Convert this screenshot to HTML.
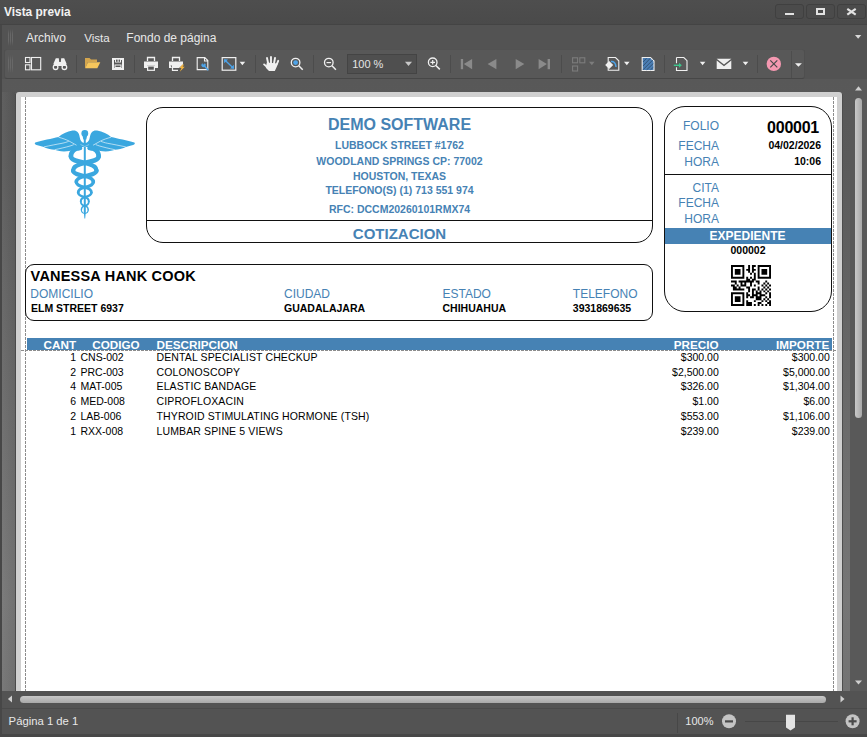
<!DOCTYPE html>
<html><head><meta charset="utf-8">
<style>
html,body{margin:0;padding:0;}
body{width:867px;height:737px;position:relative;overflow:hidden;background:#4b4b4b;font-family:"Liberation Sans",sans-serif;}
.t{position:absolute;white-space:nowrap;}
.box{position:absolute;border:1px solid #111;box-sizing:content-box;}
.a{position:absolute;}
</style></head><body>
<!-- title bar -->
<div class="a" style="left:0;top:0;width:867px;height:24px;background:linear-gradient(#4e4e4e,#4a4a4a)"></div>
<div class="a" style="left:0;top:24px;width:867px;height:1px;background:#444"></div>
<div class="t" style="left:4.00px;top:6.62px;font-size:11.9px;line-height:11.9px;font-weight:bold;color:#f2f2f2;">Vista previa</div>

<div class="a" style="left:775px;top:4px;width:27px;height:13px;border:1px solid #404040;border-radius:3px;background:#4b4b4b"></div>
<div class="a" style="left:806px;top:4px;width:27px;height:13px;border:1px solid #404040;border-radius:3px;background:#4b4b4b"></div>
<div class="a" style="left:837px;top:4px;width:27px;height:13px;border:1px solid #404040;border-radius:3px;background:#4b4b4b"></div>
<div class="a" style="left:785px;top:12.7px;width:9px;height:2.6px;background:#e2e2e2"></div>
<div class="a" style="left:816px;top:8px;width:5px;height:3px;border:2px solid #e2e2e2"></div>
<svg class="a" style="left:840px;top:4px" width="24" height="16" viewBox="840 4 24 16"><path d="M847.3 8.8 L855.7 14.6 M855.7 8.8 L847.3 14.6" stroke="#e2e2e2" stroke-width="2.2"/></svg>
<div class="a" style="left:16px;top:26px;width:1px;height:22px"></div>

<!-- main panel -->
<div class="a" style="left:0;top:25px;width:2px;height:712px;background:#474747"></div>
<div class="a" style="left:2px;top:25px;width:865px;height:54px;background:#535353"></div>
<div class="a" style="left:8px;top:29px;width:1px;height:17px;background:linear-gradient(rgba(120,120,120,0),rgba(106,106,106,.9) 30%,rgba(106,106,106,.9) 70%,rgba(120,120,120,0))"></div>
<div class="a" style="left:10px;top:29px;width:1px;height:17px;background:linear-gradient(rgba(120,120,120,0),rgba(106,106,106,.9) 30%,rgba(106,106,106,.9) 70%,rgba(120,120,120,0))"></div>
<div class="a" style="left:12px;top:29px;width:1px;height:17px;background:linear-gradient(rgba(120,120,120,0),rgba(106,106,106,.9) 30%,rgba(106,106,106,.9) 70%,rgba(120,120,120,0))"></div>
<svg class="a" style="left:850px;top:30px" width="17" height="12" viewBox="850 30 17 12"><path d="M855 35 L861.3 35 L858.15 38.8 Z" fill="#d8d8d8"/></svg>
<div class="t" style="left:26.00px;top:31.83px;font-size:12px;line-height:12px;font-weight:normal;color:#e8e8e8;">Archivo</div>

<div class="t" style="left:84.20px;top:32.17px;font-size:11.6px;line-height:11.6px;font-weight:normal;color:#e8e8e8;">Vista</div>

<div class="t" style="left:126.30px;top:31.83px;font-size:12px;line-height:12px;font-weight:normal;color:#e8e8e8;">Fondo de página</div>

<!-- toolbar -->
<div class="a" style="left:4px;top:49px;width:799px;height:28px;background:#585858;border:1px solid #4f4f4f;border-top-color:#525252;border-bottom-color:#474747;border-radius:3px"></div>
<div class="a" style="left:791px;top:51px;width:1px;height:27px;background:#4d4d4d"></div>
<div class="a" style="left:347px;top:54px;width:68px;height:18px;background:#4f4f4f;border:1px solid #444"></div>
<div class="t" style="left:352.20px;top:58.66px;font-size:11px;line-height:11px;font-weight:normal;color:#e6e6e6;">100 %</div>

<svg class="a" style="left:400px;top:58px" width="16" height="12" viewBox="400 58 16 12"><path d="M405 61.8 L412 61.8 L408.5 66 Z" fill="#c8c8c8"/></svg>
<div class="a" style="left:8px;top:55px;width:1px;height:18px;background:linear-gradient(rgba(120,120,120,0),rgba(106,106,106,.9) 30%,rgba(106,106,106,.9) 70%,rgba(120,120,120,0))"></div>
<div class="a" style="left:10px;top:55px;width:1px;height:18px;background:linear-gradient(rgba(120,120,120,0),rgba(106,106,106,.9) 30%,rgba(106,106,106,.9) 70%,rgba(120,120,120,0))"></div>
<div class="a" style="left:12px;top:55px;width:1px;height:18px;background:linear-gradient(rgba(120,120,120,0),rgba(106,106,106,.9) 30%,rgba(106,106,106,.9) 70%,rgba(120,120,120,0))"></div>
<div class="a" style="left:76px;top:55px;width:1px;height:18px;background:#4c4c4c"></div>
<div class="a" style="left:134px;top:55px;width:1px;height:18px;background:#4c4c4c"></div>
<div class="a" style="left:255px;top:55px;width:1px;height:18px;background:#4c4c4c"></div>
<div class="a" style="left:313px;top:55px;width:1px;height:18px;background:#4c4c4c"></div>
<div class="a" style="left:450px;top:55px;width:1px;height:18px;background:#4c4c4c"></div>
<div class="a" style="left:561px;top:55px;width:1px;height:18px;background:#4c4c4c"></div>
<div class="a" style="left:664px;top:55px;width:1px;height:18px;background:#4c4c4c"></div>
<div class="a" style="left:757px;top:55px;width:1px;height:18px;background:#4c4c4c"></div>
<svg class="a" style="left:0px;top:48px;" width="867" height="32" viewBox="0 48 867 32"><g fill="none" stroke="#f0f0f0" stroke-width="1.1"><rect x="25.5" y="57.5" width="4.5" height="5"/><rect x="25.5" y="64.8" width="4.5" height="5"/><rect x="31.5" y="57.5" width="9.2" height="12.3"/></g><g fill="#f0f0f0"><path d="M53.5 63.5 L55.8 58.2 L58.8 58.2 L59.2 62 L60.8 62 L61.2 58.2 L64.2 58.2 L66.5 63.5 L66 66 L54 66 Z"/></g><g fill="none" stroke="#f0f0f0" stroke-width="1.3"><circle cx="55.6" cy="67.2" r="2.3"/><circle cx="64.4" cy="67.2" r="2.3"/></g><path d="M85 58 L89.5 58 L91 59.5 L97 59.5 L97 62 L88 62 L85.5 68 L85 68 Z" fill="#d3a54e"/><path d="M88 62.3 L100.3 62.3 L97.3 68.3 L85.2 68.3 Z" fill="#f6c65c"/><path d="M112 58 L124 58 L124 70 L112 70 Z M114 60 L114 68 L122 68 L122 60 Z" fill="#f0f0f0" fill-rule="evenodd"/><rect x="115" y="59" width="6" height="3.5" fill="#f0f0f0"/><rect x="116" y="59.6" width="1.6" height="2.2" fill="#585858"/><rect x="118.6" y="59.6" width="1.4" height="2.2" fill="#585858"/><path d="M114.5 64.5 L121.5 64.5 L121.5 68 L114.5 68 Z M115.5 65.5 L115.5 67 L120.5 67 L120.5 65.5 Z" fill="#f0f0f0" fill-rule="evenodd"/><path d="M147.5 61 L147.5 57.5 L154.5 57.5 L154.5 61" fill="none" stroke="#f0f0f0" stroke-width="1.3"/><path d="M144 61.5 L158 61.5 L158 68 L155 68 L155 65.5 L147 65.5 L147 68 L144 68 Z" fill="#f0f0f0"/><rect x="147.6" y="66" width="6.8" height="4.3" fill="none" stroke="#f0f0f0" stroke-width="1.2"/><path d="M172.5 61 L172.5 57.5 L179.5 57.5 L179.5 61" fill="none" stroke="#f0f0f0" stroke-width="1.3"/><path d="M169 61.5 L183 61.5 L183 64.5 L179 68 L172 68 L172 65.5 L170.5 65.5 L172 68 L169 68 Z" fill="#f0f0f0"/><path d="M172.5 66 L172.5 70.3 L178 70.3" fill="none" stroke="#f0f0f0" stroke-width="1.2"/><path d="M182.5 64.5 L179.5 68 L181.5 68 L179.8 71.7 L184.8 66.8 L182.6 66.8 L184 64.5 Z" fill="#f2b33d"/><path d="M197.2 57.6 L204.8 57.6 L207.8 60.6 L207.8 69.6 L197.2 69.6 Z M204.5 57.6 L204.5 61 L207.8 61" fill="none" stroke="#f0f0f0" stroke-width="1.1"/><path d="M201.6 64 A2.2 2.2 0 1 0 204.8 63.2 L203.8 64.5 L202.8 64.3 L202.6 63.3 Z" fill="#4da3e8"/><path d="M204 65.5 L208.3 70.3" stroke="#4da3e8" stroke-width="1.6"/><rect x="222.2" y="57.6" width="13.6" height="12.6" fill="none" stroke="#f0f0f0" stroke-width="1.2"/><path d="M224.5 59.8 L233.5 68.2" stroke="#4da3e8" stroke-width="1.3"/><path d="M224 59.3 L228 59.5 L224.2 63.2 Z M234 68.7 L230 68.5 L233.8 64.8 Z" fill="#4da3e8"/><path d="M239.6 61.8 L245.2 61.8 L242.4 65.3 Z" fill="#f0f0f0"/><path d="M589 61.8 L594.6 61.8 L591.8 65.3 Z" fill="#7c7c7c"/><path d="M624 61.8 L629.6 61.8 L626.8 65.3 Z" fill="#f0f0f0"/><path d="M699.8 61.8 L705.4 61.8 L702.5999999999999 65.3 Z" fill="#f0f0f0"/><path d="M742.7 61.8 L748.3000000000001 61.8 L745.5 65.3 Z" fill="#f0f0f0"/><g stroke="#f0f0f0" stroke-width="1.9" stroke-linecap="round" fill="none"><path d="M267.0 58 L268.3 64 M271.0 57 L271.0 63.5 M275.0 58 L274.0 63.5 M278.2 60.8 L276.5 65 M264.1 64.4 L268 67.8"/></g><path d="M266.8 62.5 L277.6 63.5 L276.8 66.8 L274.8 70.9 L269 70.9 L265.8 67.8 Z" fill="#f0f0f0"/><circle cx="295.6" cy="62.6" r="4.3" fill="none" stroke="#f0f0f0" stroke-width="1.3"/><circle cx="295.6" cy="62.6" r="2.4" fill="#4da3e8"/><path d="M298.8 65.8 L302.7 69.7" stroke="#f0f0f0" stroke-width="1.5"/><circle cx="328.8" cy="62.6" r="4.3" fill="none" stroke="#f0f0f0" stroke-width="1.3"/><path d="M326.5 62.6 L331.1 62.6" stroke="#f0f0f0" stroke-width="1.2"/><path d="M332 65.8 L335.9 69.7" stroke="#f0f0f0" stroke-width="1.5"/><circle cx="432.7" cy="62.3" r="4.3" fill="none" stroke="#f0f0f0" stroke-width="1.3"/><path d="M430.4 62.3 L435 62.3 M432.7 60 L432.7 64.6" stroke="#f0f0f0" stroke-width="1.2"/><path d="M435.9 65.5 L439.8 69.4" stroke="#f0f0f0" stroke-width="1.5"/><rect x="460.8" y="59" width="2.3" height="10.2" fill="#8a8a8a"/><path d="M472.1 59 L472.1 69.2 L463.8 64.1 Z" fill="#8a8a8a"/><path d="M496.4 59 L496.4 69.2 L487.6 64.1 Z" fill="#8a8a8a"/><path d="M515.7 59 L515.7 69.2 L524.3 64.1 Z" fill="#8a8a8a"/><path d="M538.6 59 L538.6 69.2 L546.9 64.1 Z" fill="#8a8a8a"/><rect x="547.6" y="59" width="2.4" height="10.2" fill="#8a8a8a"/><g fill="none" stroke="#7c7c7c" stroke-width="1.1"><rect x="572.6" y="57.8" width="5" height="5"/><rect x="579.8" y="57.8" width="5" height="5"/><rect x="572.6" y="66" width="5" height="5"/></g><path d="M608.2 57.5 L615.5 57.5 L618.8 60.8 L618.8 70.3 L608.2 70.3 Z" fill="none" stroke="#f0f0f0" stroke-width="1.1"/><path d="M605.2 65 L609.2 61 L613.2 65 L609.2 69 Z" fill="#f0f0f0"/><path d="M611 61.5 C614 61.3 615.8 63 616 67" fill="none" stroke="#4da3e8" stroke-width="1.5"/><path d="M642.2 57.5 L650.5 57.5 L654 61 L654 70.5 L642.2 70.5 Z" fill="#4a7db3" stroke="#f0f0f0" stroke-width="1.1"/><g stroke="#2f4f70" stroke-width="0.9"><path d="M643 62 L646.5 58.3 M643 66 L650.3 58.3 M643 69.8 L653.3 59.5 M646.7 69.8 L653.3 63.5 M650.5 69.8 L653.3 67.3"/></g><path d="M676.5 57.5 L683.8 57.5 L687 60.7 L687 70.5 L676.5 70.5 L676.5 67.3 M676.5 63.3 L676.5 57.5" fill="none" stroke="#f0f0f0" stroke-width="1.1"/><path d="M673.8 65.3 L680 65.3" stroke="#3cc58b" stroke-width="1.4"/><path d="M679 62.8 L681.8 65.3 L679 67.8 Z" fill="#3cc58b"/><path d="M716.7 58.7 L731.3 58.7 L724 64.5 Z" fill="#f0f0f0"/><path d="M716.7 60.5 L724 66.3 L731.3 60.5 L731.3 69.1 L716.7 69.1 Z" fill="#f0f0f0"/><circle cx="773.8" cy="63.9" r="7.2" fill="#f598b1"/><path d="M770.3 60.4 L777.3 67.4 M777.3 60.4 L770.3 67.4" stroke="#4a4a4a" stroke-width="1.2"/><path d="M795 63.2 L801.9 63.2 L798.45 66.7 Z" fill="#f0f0f0"/></svg>

<!-- preview area -->
<div class="a" style="left:2px;top:79px;width:848px;height:612px;background:linear-gradient(#585858 0px,#5a5a5a 80px,#6a6a6a 320px,#767676 520px,#737373 613px)"></div>
<!-- page -->
<div class="a" style="left:16px;top:92px;width:826px;height:599px;background:#d0d0d0;border-radius:3px 3px 0 0"></div>
<div class="a" style="left:2px;top:92px;width:13px;height:599px;background:linear-gradient(90deg,rgba(255,255,255,.045),rgba(0,0,0,.045))"></div>
<div class="a" style="left:15px;top:94px;width:1px;height:597px;background:#4a4a4a"></div>
<div class="a" style="left:842px;top:94px;width:1px;height:597px;background:#4d4d4d"></div>
<div class="a" style="left:21px;top:97px;width:816px;height:594px;background:#fff;overflow:hidden">
<div class="a" style="left:4px;top:0;width:1px;height:594px;background:repeating-linear-gradient(#8c8c8c 0 2.6px,rgba(255,255,255,0) 2.6px 4px)"></div>
<div class="a" style="left:812px;top:0;width:1px;height:594px;background:repeating-linear-gradient(#8c8c8c 0 2.6px,rgba(255,255,255,0) 2.6px 4px)"></div>
</div>
<div class="a" style="left:0;top:0;width:867px;height:737px;">
<svg class="a" style="left:30px;top:125px" width="110" height="100" viewBox="30 125 110 100"><path d="M77.8 132.3 C76.5 130.5 74.5 130.2 72.5 130.5 C67 131.5 62 134 58.5 137 C52 138.5 42 140.5 35.3 142.6 C34.2 143.2 34.8 144.5 36.5 145 C39 145.8 41.5 146.5 43.8 146.9 C44.5 147.6 47 148.4 49.5 148.9 C51 149.3 53 149.6 54.8 149.7 C56 150.5 60 151.2 64 151.5 C68 151.5 71 150.8 74 149.6 L84.8 146.5 L84.8 143 C82.5 142.8 81 141.5 80.3 139.5 C79.5 137 79.5 134 77.8 132.3 Z" fill="#3aa7df"/><path d="M77.8 132.3 C76.5 130.5 74.5 130.2 72.5 130.5 C67 131.5 62 134 58.5 137 C52 138.5 42 140.5 35.3 142.6 C34.2 143.2 34.8 144.5 36.5 145 C39 145.8 41.5 146.5 43.8 146.9 C44.5 147.6 47 148.4 49.5 148.9 C51 149.3 53 149.6 54.8 149.7 C56 150.5 60 151.2 64 151.5 C68 151.5 71 150.8 74 149.6 L84.8 146.5 L84.8 143 C82.5 142.8 81 141.5 80.3 139.5 C79.5 137 79.5 134 77.8 132.3 Z" fill="#3aa7df" transform="translate(169.6 0) scale(-1 1)"/><path d="M83.8 137 L85.8 137 L85.8 212 L85.2 218.5 L84.4 218.5 L83.8 212 Z" fill="#3aa7df"/><ellipse cx="84.8" cy="133.4" rx="3.4" ry="3.3" fill="#3aa7df"/><path d="M82.6 136 L87 136 L86.3 139.5 L83.3 139.5 Z" fill="#3aa7df"/><path d="M58.5 137.2 C62.5 138.3 66 139.5 69 141 C71.5 142.3 74 143.8 76.5 145.2 M43.8 146.9 C50 145.6 57 144.2 62 143.3 C65 142.7 67 142 68.7 141.3 M54.8 149.7 C60 148.6 66 147.2 70 146 C71.5 145.5 72.8 145.1 73.8 144.6" fill="none" stroke="#ffffff" stroke-opacity="0.8" stroke-width="0.75"/><path d="M58.5 137.2 C62.5 138.3 66 139.5 69 141 C71.5 142.3 74 143.8 76.5 145.2 M43.8 146.9 C50 145.6 57 144.2 62 143.3 C65 142.7 67 142 68.7 141.3 M54.8 149.7 C60 148.6 66 147.2 70 146 C71.5 145.5 72.8 145.1 73.8 144.6" fill="none" stroke="#ffffff" stroke-opacity="0.8" stroke-width="0.75" transform="translate(169.6 0) scale(-1 1)"/><path d="M80.5 144.5 L84.8 146.5 L89.1 144.5" fill="none" stroke="#fff" stroke-opacity="0.6" stroke-width="0.6"/><path d="M79.50 148.00 C75.20 148.00 70.90 151.32 70.90 156.30" fill="none" stroke="#3aa7df" stroke-width="4.6" stroke-linecap="round"/><path d="M70.90 156.30 C70.90 159.93 77.16 161.22 84.80 162.90" fill="none" stroke="#3aa7df" stroke-width="4.6" stroke-linecap="round"/><path d="M84.80 162.90 C91.23 164.32 96.50 166.32 96.50 170.50" fill="none" stroke="#3aa7df" stroke-width="4.4" stroke-linecap="round"/><path d="M96.50 170.50 C96.50 173.63 91.23 174.78 84.80 176.20" fill="none" stroke="#3aa7df" stroke-width="4.2" stroke-linecap="round"/><path d="M84.80 176.20 C80.12 177.23 76.30 178.81 76.30 182.00" fill="none" stroke="#3aa7df" stroke-width="3.6" stroke-linecap="round"/><path d="M76.30 182.00 C76.30 184.97 80.12 186.37 84.80 187.40" fill="none" stroke="#3aa7df" stroke-width="3.3" stroke-linecap="round"/><path d="M84.80 187.40 C88.43 188.20 91.40 189.74 91.40 192.60" fill="none" stroke="#3aa7df" stroke-width="2.8" stroke-linecap="round"/><path d="M91.40 192.60 C91.40 195.13 88.43 196.40 84.80 197.20" fill="none" stroke="#3aa7df" stroke-width="2.4" stroke-linecap="round"/><path d="M84.80 197.20 C82.60 197.68 80.80 199.09 80.80 201.40" fill="none" stroke="#3aa7df" stroke-width="2.0" stroke-linecap="round"/><path d="M80.80 201.40 C80.80 203.82 82.60 205.32 84.80 205.80" fill="none" stroke="#3aa7df" stroke-width="1.7" stroke-linecap="round"/><path d="M84.80 205.80 C86.67 206.21 88.20 207.65 88.20 209.90" fill="none" stroke="#3aa7df" stroke-width="1.4" stroke-linecap="round"/><path d="M88.20 209.90 C88.20 211.88 86.67 213.09 84.80 213.50" fill="none" stroke="#3aa7df" stroke-width="1.1" stroke-linecap="round"/><path d="M90.10 148.00 C94.40 148.00 98.70 151.32 98.70 156.30" fill="none" stroke="#3aa7df" stroke-width="4.6" stroke-linecap="round"/><path d="M98.70 156.30 C98.70 159.93 92.44 161.22 84.80 162.90" fill="none" stroke="#3aa7df" stroke-width="4.6" stroke-linecap="round"/><path d="M84.80 162.90 C78.36 164.32 73.10 166.32 73.10 170.50" fill="none" stroke="#3aa7df" stroke-width="4.4" stroke-linecap="round"/><path d="M73.10 170.50 C73.10 173.63 78.36 174.78 84.80 176.20" fill="none" stroke="#3aa7df" stroke-width="4.2" stroke-linecap="round"/><path d="M84.80 176.20 C89.47 177.23 93.30 178.81 93.30 182.00" fill="none" stroke="#3aa7df" stroke-width="3.6" stroke-linecap="round"/><path d="M93.30 182.00 C93.30 184.97 89.47 186.37 84.80 187.40" fill="none" stroke="#3aa7df" stroke-width="3.3" stroke-linecap="round"/><path d="M84.80 187.40 C81.17 188.20 78.20 189.74 78.20 192.60" fill="none" stroke="#3aa7df" stroke-width="2.8" stroke-linecap="round"/><path d="M78.20 192.60 C78.20 195.13 81.17 196.40 84.80 197.20" fill="none" stroke="#3aa7df" stroke-width="2.4" stroke-linecap="round"/><path d="M84.80 197.20 C87.00 197.68 88.80 199.09 88.80 201.40" fill="none" stroke="#3aa7df" stroke-width="2.0" stroke-linecap="round"/><path d="M88.80 201.40 C88.80 203.82 87.00 205.32 84.80 205.80" fill="none" stroke="#3aa7df" stroke-width="1.7" stroke-linecap="round"/><path d="M84.80 205.80 C82.93 206.21 81.40 207.65 81.40 209.90" fill="none" stroke="#3aa7df" stroke-width="1.4" stroke-linecap="round"/><path d="M81.40 209.90 C81.40 211.88 82.93 213.09 84.80 213.50" fill="none" stroke="#3aa7df" stroke-width="1.1" stroke-linecap="round"/><ellipse cx="78" cy="148.2" rx="4.2" ry="2.2" fill="#3aa7df"/><ellipse cx="91.6" cy="148.2" rx="4.2" ry="2.2" fill="#3aa7df"/></svg>
<div class="box" style="left:146px;top:107px;width:505px;height:134px;border-radius:17px;"></div>
<div style="position:absolute;left:147px;top:220px;width:505px;height:1px;background:#111"></div>
<div class="t" style="left:99.50px;width:600px;text-align:center;top:117.01px;font-size:16px;line-height:16px;font-weight:bold;color:#4682b4;">DEMO SOFTWARE</div>
<div class="t" style="left:99.50px;width:600px;text-align:center;top:140.38px;font-size:10.5px;line-height:10.5px;font-weight:bold;color:#4682b4;">LUBBOCK STREET #1762</div>
<div class="t" style="left:99.50px;width:600px;text-align:center;top:156.28px;font-size:10.5px;line-height:10.5px;font-weight:bold;color:#4682b4;">WOODLAND SPRINGS CP: 77002</div>
<div class="t" style="left:99.50px;width:600px;text-align:center;top:171.28px;font-size:10.5px;line-height:10.5px;font-weight:bold;color:#4682b4;">HOUSTON, TEXAS</div>
<div class="t" style="left:99.50px;width:600px;text-align:center;top:185.08px;font-size:10.5px;line-height:10.5px;font-weight:bold;color:#4682b4;">TELEFONO(S) (1) 713 551 974</div>
<div class="t" style="left:99.50px;width:600px;text-align:center;top:203.58px;font-size:10.5px;line-height:10.5px;font-weight:bold;color:#4682b4;">RFC: DCCM20260101RMX74</div>
<div class="t" style="left:99.50px;width:600px;text-align:center;top:226.34px;font-size:15px;line-height:15px;font-weight:bold;color:#4682b4;">COTIZACION</div>
<div class="box" style="left:664px;top:106px;width:166px;height:204px;border-radius:21px;"></div>
<div style="position:absolute;left:665px;top:174px;width:166px;height:1px;background:#111"></div>
<div style="position:absolute;left:665px;top:228px;width:166px;height:16px;background:#4682b4"></div>
<div class="t" style="left:119.00px;width:600px;text-align:right;top:120.03px;font-size:12px;line-height:12px;font-weight:normal;color:#4682b4;">FOLIO</div>
<div class="t" style="left:119.00px;width:600px;text-align:right;top:139.73px;font-size:12px;line-height:12px;font-weight:normal;color:#4682b4;">FECHA</div>
<div class="t" style="left:119.00px;width:600px;text-align:right;top:156.03px;font-size:12px;line-height:12px;font-weight:normal;color:#4682b4;">HORA</div>
<div class="t" style="left:119.00px;width:600px;text-align:right;top:181.63px;font-size:12px;line-height:12px;font-weight:normal;color:#4682b4;">CITA</div>
<div class="t" style="left:119.00px;width:600px;text-align:right;top:196.83px;font-size:12px;line-height:12px;font-weight:normal;color:#4682b4;">FECHA</div>
<div class="t" style="left:119.00px;width:600px;text-align:right;top:212.53px;font-size:12px;line-height:12px;font-weight:normal;color:#4682b4;">HORA</div>
<div class="t" style="left:219.00px;width:600px;text-align:right;top:119.71px;font-size:16px;line-height:16px;font-weight:bold;color:#000;letter-spacing:-0.25px;">000001</div>
<div class="t" style="left:221.00px;width:600px;text-align:right;top:140.08px;font-size:10.5px;line-height:10.5px;font-weight:bold;color:#000;">04/02/2026</div>
<div class="t" style="left:221.00px;width:600px;text-align:right;top:156.08px;font-size:10.5px;line-height:10.5px;font-weight:bold;color:#000;">10:06</div>
<div class="t" style="left:447.50px;width:600px;text-align:center;top:230.03px;font-size:12px;line-height:12px;font-weight:bold;color:#fff;">EXPEDIENTE</div>
<div class="t" style="left:448.00px;width:600px;text-align:center;top:245.08px;font-size:10.5px;line-height:10.5px;font-weight:bold;color:#000;">000002</div>
<svg style="position:absolute;left:731px;top:265px" width="40" height="41" viewBox="0 0 21 21" preserveAspectRatio="none"><path d="M0 0h1v1h-1zM1 0h1v1h-1zM2 0h1v1h-1zM3 0h1v1h-1zM4 0h1v1h-1zM5 0h1v1h-1zM6 0h1v1h-1zM9 0h1v1h-1zM11 0h1v1h-1zM12 0h1v1h-1zM14 0h1v1h-1zM15 0h1v1h-1zM16 0h1v1h-1zM17 0h1v1h-1zM18 0h1v1h-1zM19 0h1v1h-1zM20 0h1v1h-1zM0 1h1v1h-1zM6 1h1v1h-1zM9 1h1v1h-1zM11 1h1v1h-1zM14 1h1v1h-1zM20 1h1v1h-1zM0 2h1v1h-1zM2 2h1v1h-1zM3 2h1v1h-1zM4 2h1v1h-1zM6 2h1v1h-1zM8 2h1v1h-1zM9 2h1v1h-1zM11 2h1v1h-1zM12 2h1v1h-1zM14 2h1v1h-1zM16 2h1v1h-1zM17 2h1v1h-1zM18 2h1v1h-1zM20 2h1v1h-1zM0 3h1v1h-1zM2 3h1v1h-1zM3 3h1v1h-1zM4 3h1v1h-1zM6 3h1v1h-1zM9 3h1v1h-1zM11 3h1v1h-1zM14 3h1v1h-1zM16 3h1v1h-1zM17 3h1v1h-1zM18 3h1v1h-1zM20 3h1v1h-1zM0 4h1v1h-1zM2 4h1v1h-1zM3 4h1v1h-1zM4 4h1v1h-1zM6 4h1v1h-1zM10 4h1v1h-1zM12 4h1v1h-1zM14 4h1v1h-1zM16 4h1v1h-1zM17 4h1v1h-1zM18 4h1v1h-1zM20 4h1v1h-1zM0 5h1v1h-1zM6 5h1v1h-1zM12 5h1v1h-1zM14 5h1v1h-1zM20 5h1v1h-1zM0 6h1v1h-1zM1 6h1v1h-1zM2 6h1v1h-1zM3 6h1v1h-1zM4 6h1v1h-1zM5 6h1v1h-1zM6 6h1v1h-1zM8 6h1v1h-1zM10 6h1v1h-1zM12 6h1v1h-1zM14 6h1v1h-1zM15 6h1v1h-1zM16 6h1v1h-1zM17 6h1v1h-1zM18 6h1v1h-1zM19 6h1v1h-1zM20 6h1v1h-1zM8 7h1v1h-1zM9 7h1v1h-1zM11 7h1v1h-1zM12 7h1v1h-1zM0 8h1v1h-1zM1 8h1v1h-1zM2 8h1v1h-1zM4 8h1v1h-1zM5 8h1v1h-1zM6 8h1v1h-1zM7 8h1v1h-1zM8 8h1v1h-1zM9 8h1v1h-1zM10 8h1v1h-1zM11 8h1v1h-1zM13 8h1v1h-1zM14 8h1v1h-1zM18 8h1v1h-1zM2 9h1v1h-1zM5 9h1v1h-1zM7 9h1v1h-1zM10 9h1v1h-1zM14 9h1v1h-1zM17 9h1v1h-1zM19 9h1v1h-1zM0 10h1v1h-1zM1 10h1v1h-1zM3 10h1v1h-1zM5 10h1v1h-1zM6 10h1v1h-1zM7 10h1v1h-1zM10 10h1v1h-1zM12 10h1v1h-1zM16 10h1v1h-1zM18 10h1v1h-1zM20 10h1v1h-1zM1 11h1v1h-1zM2 11h1v1h-1zM4 11h1v1h-1zM8 11h1v1h-1zM9 11h1v1h-1zM14 11h1v1h-1zM17 11h1v1h-1zM19 11h1v1h-1zM1 12h1v1h-1zM2 12h1v1h-1zM3 12h1v1h-1zM4 12h1v1h-1zM5 12h1v1h-1zM6 12h1v1h-1zM9 12h1v1h-1zM11 12h1v1h-1zM12 12h1v1h-1zM14 12h1v1h-1zM16 12h1v1h-1zM18 12h1v1h-1zM20 12h1v1h-1zM9 13h1v1h-1zM11 13h1v1h-1zM13 13h1v1h-1zM15 13h1v1h-1zM17 13h1v1h-1zM19 13h1v1h-1zM0 14h1v1h-1zM1 14h1v1h-1zM2 14h1v1h-1zM3 14h1v1h-1zM4 14h1v1h-1zM5 14h1v1h-1zM6 14h1v1h-1zM8 14h1v1h-1zM11 14h1v1h-1zM13 14h1v1h-1zM14 14h1v1h-1zM15 14h1v1h-1zM18 14h1v1h-1zM20 14h1v1h-1zM0 15h1v1h-1zM6 15h1v1h-1zM8 15h1v1h-1zM9 15h1v1h-1zM11 15h1v1h-1zM12 15h1v1h-1zM13 15h1v1h-1zM15 15h1v1h-1zM16 15h1v1h-1zM17 15h1v1h-1zM20 15h1v1h-1zM0 16h1v1h-1zM2 16h1v1h-1zM3 16h1v1h-1zM4 16h1v1h-1zM6 16h1v1h-1zM8 16h1v1h-1zM10 16h1v1h-1zM11 16h1v1h-1zM13 16h1v1h-1zM14 16h1v1h-1zM15 16h1v1h-1zM18 16h1v1h-1zM20 16h1v1h-1zM0 17h1v1h-1zM2 17h1v1h-1zM3 17h1v1h-1zM4 17h1v1h-1zM6 17h1v1h-1zM13 17h1v1h-1zM14 17h1v1h-1zM15 17h1v1h-1zM17 17h1v1h-1zM19 17h1v1h-1zM0 18h1v1h-1zM2 18h1v1h-1zM3 18h1v1h-1zM4 18h1v1h-1zM6 18h1v1h-1zM8 18h1v1h-1zM12 18h1v1h-1zM16 18h1v1h-1zM18 18h1v1h-1zM20 18h1v1h-1zM0 19h1v1h-1zM6 19h1v1h-1zM8 19h1v1h-1zM9 19h1v1h-1zM10 19h1v1h-1zM14 19h1v1h-1zM15 19h1v1h-1zM19 19h1v1h-1zM20 19h1v1h-1zM0 20h1v1h-1zM1 20h1v1h-1zM2 20h1v1h-1zM3 20h1v1h-1zM4 20h1v1h-1zM5 20h1v1h-1zM6 20h1v1h-1zM8 20h1v1h-1zM9 20h1v1h-1zM10 20h1v1h-1zM12 20h1v1h-1zM14 20h1v1h-1zM16 20h1v1h-1zM18 20h1v1h-1zM20 20h1v1h-1z" fill="#000"/></svg>
<div class="box" style="left:25px;top:264px;width:626px;height:55px;border-radius:9px;"></div>
<div class="t" style="left:30.60px;top:268.56px;font-size:14.5px;line-height:14.5px;font-weight:bold;color:#000;letter-spacing:0.2px;">VANESSA HANK COOK</div>
<div class="t" style="left:30.30px;top:287.93px;font-size:12px;line-height:12px;font-weight:normal;color:#4682b4;">DOMICILIO</div>
<div class="t" style="left:31.00px;top:302.98px;font-size:10.5px;line-height:10.5px;font-weight:bold;color:#000;">ELM STREET 6937</div>
<div class="t" style="left:284.00px;top:287.93px;font-size:12px;line-height:12px;font-weight:normal;color:#4682b4;">CIUDAD</div>
<div class="t" style="left:284.00px;top:302.98px;font-size:10.5px;line-height:10.5px;font-weight:bold;color:#000;">GUADALAJARA</div>
<div class="t" style="left:442.50px;top:287.93px;font-size:12px;line-height:12px;font-weight:normal;color:#4682b4;">ESTADO</div>
<div class="t" style="left:442.50px;top:302.98px;font-size:10.5px;line-height:10.5px;font-weight:bold;color:#000;">CHIHUAHUA</div>
<div class="t" style="left:572.80px;top:287.93px;font-size:12px;line-height:12px;font-weight:normal;color:#4682b4;">TELEFONO</div>
<div class="t" style="left:572.80px;top:302.98px;font-size:10.5px;line-height:10.5px;font-weight:bold;color:#000;">3931869635</div>
<div style="position:absolute;left:27px;top:338px;width:805px;height:12px;background:#4682b4"></div>
<div class="t" style="left:43.60px;top:338.78px;font-size:11.7px;line-height:11.7px;font-weight:bold;color:#fff;">CANT</div>
<div class="t" style="left:92.30px;top:338.78px;font-size:11.7px;line-height:11.7px;font-weight:bold;color:#fff;">CODIGO</div>
<div class="t" style="left:156.50px;top:338.78px;font-size:11.7px;line-height:11.7px;font-weight:bold;color:#fff;">DESCRIPCION</div>
<div class="t" style="left:118.60px;width:600px;text-align:right;top:338.78px;font-size:11.7px;line-height:11.7px;font-weight:bold;color:#fff;">PRECIO</div>
<div class="t" style="left:229.30px;width:600px;text-align:right;top:338.78px;font-size:11.7px;line-height:11.7px;font-weight:bold;color:#fff;">IMPORTE</div>
<div style="position:absolute;left:21px;top:350px;width:816px;height:1px;background:repeating-linear-gradient(90deg,#8c8c8c 0 2.6px,rgba(255,255,255,0) 2.6px 4px)"></div>
<div class="t" style="left:-524.00px;width:600px;text-align:right;top:351.78px;font-size:10.5px;line-height:10.5px;font-weight:normal;color:#000;">1</div>
<div class="t" style="left:80.50px;top:351.78px;font-size:10.5px;line-height:10.5px;font-weight:normal;color:#000;">CNS-002</div>
<div class="t" style="left:156.50px;top:351.78px;font-size:10.5px;line-height:10.5px;font-weight:normal;color:#000;letter-spacing:0.13px;">DENTAL SPECIALIST CHECKUP</div>
<div class="t" style="left:118.80px;width:600px;text-align:right;top:351.78px;font-size:10.5px;line-height:10.5px;font-weight:normal;color:#000;">$300.00</div>
<div class="t" style="left:229.80px;width:600px;text-align:right;top:351.78px;font-size:10.5px;line-height:10.5px;font-weight:normal;color:#000;">$300.00</div>
<div class="t" style="left:-524.00px;width:600px;text-align:right;top:366.63px;font-size:10.5px;line-height:10.5px;font-weight:normal;color:#000;">2</div>
<div class="t" style="left:80.50px;top:366.63px;font-size:10.5px;line-height:10.5px;font-weight:normal;color:#000;">PRC-003</div>
<div class="t" style="left:156.50px;top:366.63px;font-size:10.5px;line-height:10.5px;font-weight:normal;color:#000;letter-spacing:0.13px;">COLONOSCOPY</div>
<div class="t" style="left:118.80px;width:600px;text-align:right;top:366.63px;font-size:10.5px;line-height:10.5px;font-weight:normal;color:#000;">$2,500.00</div>
<div class="t" style="left:229.80px;width:600px;text-align:right;top:366.63px;font-size:10.5px;line-height:10.5px;font-weight:normal;color:#000;">$5,000.00</div>
<div class="t" style="left:-524.00px;width:600px;text-align:right;top:381.48px;font-size:10.5px;line-height:10.5px;font-weight:normal;color:#000;">4</div>
<div class="t" style="left:80.50px;top:381.48px;font-size:10.5px;line-height:10.5px;font-weight:normal;color:#000;">MAT-005</div>
<div class="t" style="left:156.50px;top:381.48px;font-size:10.5px;line-height:10.5px;font-weight:normal;color:#000;letter-spacing:0.13px;">ELASTIC BANDAGE</div>
<div class="t" style="left:118.80px;width:600px;text-align:right;top:381.48px;font-size:10.5px;line-height:10.5px;font-weight:normal;color:#000;">$326.00</div>
<div class="t" style="left:229.80px;width:600px;text-align:right;top:381.48px;font-size:10.5px;line-height:10.5px;font-weight:normal;color:#000;">$1,304.00</div>
<div class="t" style="left:-524.00px;width:600px;text-align:right;top:396.33px;font-size:10.5px;line-height:10.5px;font-weight:normal;color:#000;">6</div>
<div class="t" style="left:80.50px;top:396.33px;font-size:10.5px;line-height:10.5px;font-weight:normal;color:#000;">MED-008</div>
<div class="t" style="left:156.50px;top:396.33px;font-size:10.5px;line-height:10.5px;font-weight:normal;color:#000;letter-spacing:0.13px;">CIPROFLOXACIN</div>
<div class="t" style="left:118.80px;width:600px;text-align:right;top:396.33px;font-size:10.5px;line-height:10.5px;font-weight:normal;color:#000;">$1.00</div>
<div class="t" style="left:229.80px;width:600px;text-align:right;top:396.33px;font-size:10.5px;line-height:10.5px;font-weight:normal;color:#000;">$6.00</div>
<div class="t" style="left:-524.00px;width:600px;text-align:right;top:411.18px;font-size:10.5px;line-height:10.5px;font-weight:normal;color:#000;">2</div>
<div class="t" style="left:80.50px;top:411.18px;font-size:10.5px;line-height:10.5px;font-weight:normal;color:#000;">LAB-006</div>
<div class="t" style="left:156.50px;top:411.18px;font-size:10.5px;line-height:10.5px;font-weight:normal;color:#000;letter-spacing:0.13px;">THYROID STIMULATING HORMONE (TSH)</div>
<div class="t" style="left:118.80px;width:600px;text-align:right;top:411.18px;font-size:10.5px;line-height:10.5px;font-weight:normal;color:#000;">$553.00</div>
<div class="t" style="left:229.80px;width:600px;text-align:right;top:411.18px;font-size:10.5px;line-height:10.5px;font-weight:normal;color:#000;">$1,106.00</div>
<div class="t" style="left:-524.00px;width:600px;text-align:right;top:426.03px;font-size:10.5px;line-height:10.5px;font-weight:normal;color:#000;">1</div>
<div class="t" style="left:80.50px;top:426.03px;font-size:10.5px;line-height:10.5px;font-weight:normal;color:#000;">RXX-008</div>
<div class="t" style="left:156.50px;top:426.03px;font-size:10.5px;line-height:10.5px;font-weight:normal;color:#000;letter-spacing:0.13px;">LUMBAR SPINE 5 VIEWS</div>
<div class="t" style="left:118.80px;width:600px;text-align:right;top:426.03px;font-size:10.5px;line-height:10.5px;font-weight:normal;color:#000;">$239.00</div>
<div class="t" style="left:229.80px;width:600px;text-align:right;top:426.03px;font-size:10.5px;line-height:10.5px;font-weight:normal;color:#000;">$239.00</div>

</div>
<!-- vertical scrollbar -->
<div class="a" style="left:850px;top:79px;width:17px;height:612px;background:#595959"></div>
<div class="a" style="left:855px;top:98px;width:7px;height:320px;background:linear-gradient(90deg,#c8c8c8,#a8a8a8);border-radius:4px"></div>
<!-- horizontal scrollbar -->
<div class="a" style="left:2px;top:691px;width:865px;height:17px;background:#535353"></div>
<div class="a" style="left:20px;top:696px;width:806px;height:7px;background:linear-gradient(#c8c8c8,#a8a8a8);border-radius:4px"></div>
<!-- status bar -->
<div class="a" style="left:2px;top:708px;width:865px;height:1px;background:#4a4a4a"></div>
<div class="a" style="left:2px;top:709px;width:865px;height:25px;background:#535353"></div>
<div class="a" style="left:0;top:734px;width:867px;height:3px;background:#474747"></div>
<div class="t" style="left:8.60px;top:715.52px;font-size:11.3px;line-height:11.3px;font-weight:normal;color:#e8e8e8;">Página 1 de 1</div>

<div class="t" style="left:685.30px;top:715.86px;font-size:11px;line-height:11px;font-weight:normal;color:#e8e8e8;">100%</div>

<div class="a" style="left:677px;top:713px;width:1px;height:20px;background:#474747"></div>
<svg class="a" style="left:700px;top:709px" width="167" height="25" viewBox="700 709 167 25">
<circle cx="729" cy="721.3" r="7" fill="#c4c4c4"/><rect x="725" y="720.3" width="8" height="2.2" fill="#4a4a4a"/>
<rect x="745" y="721" width="93" height="1" fill="#474747"/>
<path d="M786 714.8 L795 714.8 L795 727.5 L790.5 730.5 L786 727.5 Z" fill="#e4e4e4"/>
<circle cx="852.6" cy="721.3" r="7" fill="#c4c4c4"/><rect x="848.6" y="720.2" width="8" height="2.2" fill="#4a4a4a"/><rect x="851.5" y="717.3" width="2.2" height="8" fill="#4a4a4a"/>
</svg>
<svg class="a" style="left:0;top:80px" width="867" height="630" viewBox="0 80 867 630">
<path d="M855 90.4 L862 90.4 L858.5 86.3 Z" fill="#cfcfcf"/>
<path d="M855 680.5 L862 680.5 L858.5 684.5 Z" fill="#cfcfcf"/>
<path d="M12 695.5 L12 702.5 L7.9 699 Z" fill="#cfcfcf"/>
<path d="M840.5 695.5 L840.5 702.5 L844.5 699 Z" fill="#cfcfcf"/>
</svg>
</body></html>
